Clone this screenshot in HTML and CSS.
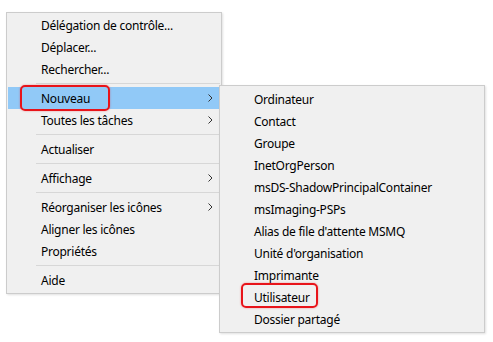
FILE: index.html
```html
<!DOCTYPE html>
<html lang="fr">
<head>
<meta charset="utf-8">
<link rel="stylesheet" href="styles.css">
</head>
<body>
<div class="desk">
  <div class="menu main">
    <div class="item">Délégation de contrôle...</div>
    <div class="item">Déplacer...</div>
    <div class="item">Rechercher...</div>
    <div class="sep"></div>
    <div class="item active">Nouveau<svg class="chev" viewBox="0 0 5 8" width="5" height="8"><path d="M0.5 0.5 L4 4 L0.5 7.5" fill="none" stroke="#333" stroke-width="1"/></svg></div>
    <div class="item">Toutes les tâches<svg class="chev" viewBox="0 0 5 8" width="5" height="8"><path d="M0.5 0.5 L4 4 L0.5 7.5" fill="none" stroke="#333" stroke-width="1"/></svg></div>
    <div class="sep"></div>
    <div class="item">Actualiser</div>
    <div class="sep"></div>
    <div class="item">Affichage<svg class="chev" viewBox="0 0 5 8" width="5" height="8"><path d="M0.5 0.5 L4 4 L0.5 7.5" fill="none" stroke="#333" stroke-width="1"/></svg></div>
    <div class="sep"></div>
    <div class="item">Réorganiser les icônes<svg class="chev" viewBox="0 0 5 8" width="5" height="8"><path d="M0.5 0.5 L4 4 L0.5 7.5" fill="none" stroke="#333" stroke-width="1"/></svg></div>
    <div class="item">Aligner les icônes</div>
    <div class="item">Propriétés</div>
    <div class="sep"></div>
    <div class="item">Aide</div>
  </div>
  <div class="menu sub">
    <div class="item">Ordinateur</div>
    <div class="item">Contact</div>
    <div class="item">Groupe</div>
    <div class="item">InetOrgPerson</div>
    <div class="item">msDS-ShadowPrincipalContainer</div>
    <div class="item">msImaging-PSPs</div>
    <div class="item">Alias de file d'attente MSMQ</div>
    <div class="item">Unité d'organisation</div>
    <div class="item">Imprimante</div>
    <div class="item">Utilisateur</div>
    <div class="item">Dossier partagé</div>
  </div>
  <div class="mark mark-nouveau"></div>
  <div class="mark mark-user"></div>
</div>
</body>
</html>
```
FILE: styles.css
```css
html, body {
  margin: 0;
  padding: 0;
  background: #ffffff;
}
.desk {
  position: relative;
  width: 493px;
  height: 342px;
  font-family: "Noto Sans", "Open Sans", sans-serif;
  font-size: 12px;
  letter-spacing: -0.25px;
  color: #000;
}
.menu {
  position: absolute;
  box-sizing: border-box;
  background: #f0f0f0;
  border: 1px solid #cccccc;
  padding: 1px 1px 2px 1px;
  box-shadow: 1px 1px 2px rgba(0,0,0,0.12);
}
.main {
  left: 6px;
  top: 12px;
  width: 216px;
}
.sub {
  left: 219px;
  top: 85px;
  width: 266px;
  padding-top: 2px;
}
.item {
  height: 22px;
  display: flex;
  align-items: center;
  padding-left: 33px;
  padding-right: 7px;
  white-space: nowrap;
}
.item.active {
  background: #91c9f7;
}
.chev {
  margin-left: auto;
  display: block;
}
.sep {
  height: 7px;
  display: flex;
  align-items: center;
  padding-left: 28px;
}
.sep::after {
  content: "";
  flex: 1;
  height: 1px;
  background: #d7d7d7;
}
.mark {
  position: absolute;
  box-sizing: border-box;
  border: 2px solid #e8141a;
  border-radius: 5px;
  box-shadow: 0 0 2px rgba(232,20,26,0.45);
}
.mark-nouveau {
  left: 20px;
  top: 85px;
  width: 90px;
  height: 26px;
}
.mark-user {
  left: 241px;
  top: 283px;
  width: 77px;
  height: 25px;
}
```
